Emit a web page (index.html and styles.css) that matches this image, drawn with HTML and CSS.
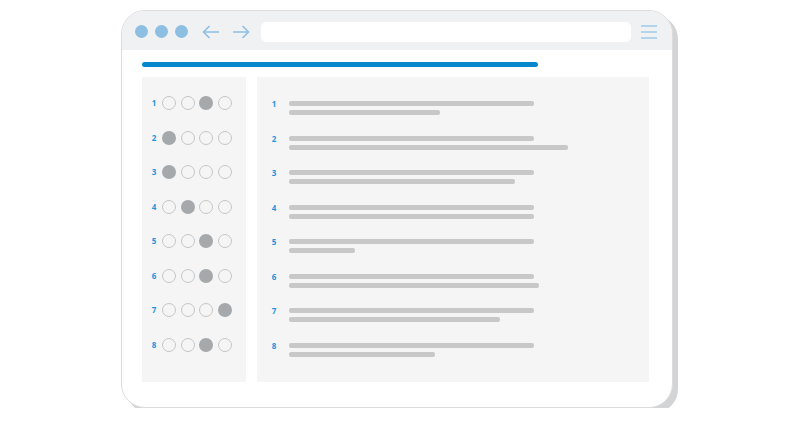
FILE: index.html
```html
<!DOCTYPE html>
<html>
<head>
  <title>Survey Preview</title>
  <link rel="stylesheet" href="styles.css">
</head>
<body>
  <div class="window">
    <div class="titlebar">
      <span class="dot"></span>
      <span class="dot"></span>
      <span class="dot"></span>
      <svg class="arrow back" width="18" height="14" viewBox="0 0 18 14">
        <path d="M17 7H1.5M7.5 1L1.5 7l6 6" fill="none" stroke="#8dbfe3" stroke-width="1.6"/>
      </svg>
      <svg class="arrow fwd" width="18" height="14" viewBox="0 0 18 14">
        <path d="M1 7h15.5M10.5 1l6 6-6 6" fill="none" stroke="#8dbfe3" stroke-width="1.6"/>
      </svg>
      <div class="url"></div>
      <svg class="menu" width="16" height="14" viewBox="0 0 16 14">
        <path d="M0 1h16M0 7h16M0 13h16" stroke="#9ecae8" stroke-width="1.6"/>
      </svg>
    </div>

    <div class="content">
      <div class="progress"></div>
      <div class="panels">
        <div class="panel answers" id="answers"></div>
        <div class="panel questions" id="questions"></div>
      </div>
    </div>
  </div>

  <script>
    // which circle is picked on each row, and the width of each second line
    const picks = [3, 1, 1, 2, 3, 3, 4, 3];
    const lineWidths = [151, 279, 226, 245, 66, 250, 211, 146];

    const answers = document.getElementById("answers");
    const questions = document.getElementById("questions");

    for (let i = 0; i < picks.length; i++) {
      const row = document.createElement("div");
      row.className = "answer-row";
      let html = `<span class="num">${i + 1}</span>`;
      for (let c = 1; c <= 4; c++) {
        html += `<span class="circle${c === picks[i] ? " filled" : ""}"></span>`;
      }
      row.innerHTML = html;
      answers.appendChild(row);

      const q = document.createElement("div");
      q.className = "question-row";
      q.innerHTML = `<span class="num">${i + 1}</span>
        <div class="lines">
          <div class="line"></div>
          <div class="line" style="width: ${lineWidths[i]}px"></div>
        </div>`;
      questions.appendChild(q);
    }
  </script>
</body>
</html>
```

FILE: styles.css
```css
body {
  margin: 0;
  background-color: #fff;
  font-family: "Open Sans", Arial, sans-serif;
}

.window {
  box-sizing: border-box;
  margin: 10px 0 0 121px;
  width: 552px;
  height: 398px;
  border: 1px solid #dcdcde;
  border-radius: 24px;
  background-color: #fff;
  box-shadow: 5px 5px 0 #d3d4d6;
  overflow: hidden;
}

.titlebar {
  box-sizing: border-box;
  display: flex;
  align-items: center;
  height: 39px;
  padding: 2px 0 0 13px;
  background-color: #f0f1f3;
}

.dot {
  width: 13px;
  height: 13px;
  border-radius: 50%;
  background-color: #8dbfe3;
  margin-right: 7px;
}

.arrow.back {
  margin-left: 7px;
}

.arrow.fwd {
  margin-left: 12px;
}

.url {
  flex: 1;
  height: 20px;
  margin: 0 10px 0 11px;
  border-radius: 5px;
  background-color: #fff;
}

.menu {
  margin-right: 15px;
}

.content {
  padding: 12px 23px 0 20px;
}

.progress {
  width: 396px;
  height: 5px;
  border-radius: 3px;
  background-color: #0788cc;
}

.panels {
  display: flex;
  gap: 11px;
  margin-top: 10px;
}

.panel {
  box-sizing: border-box;
  height: 305px;
  background-color: #f5f5f5;
}

.answers {
  width: 104px;
  padding: 19px 0 0 7px;
}

.questions {
  flex: 1;
  padding: 24px 0 0 12px;
}

.num {
  width: 10px;
  font-size: 8px;
  font-weight: 700;
  line-height: 10px;
  text-align: center;
  color: #2196dc;
}

.answer-row {
  display: flex;
  align-items: flex-start;
  height: 34.5px;
}

.answer-row .num {
  margin: 2px 3px 0 0;
}

.circle {
  box-sizing: border-box;
  width: 14px;
  height: 14px;
  margin-right: 4.6px;
  border: 1px solid #c6c6c6;
  border-radius: 50%;
}

.circle.filled {
  border: none;
  background-color: #a5a9ab;
}

.question-row {
  display: flex;
  height: 34.5px;
}

.question-row .num {
  margin-top: -2px;
  margin-right: 10px;
}

.lines {
  display: flex;
  flex-direction: column;
  gap: 4px;
}

.line {
  width: 245px;
  height: 5px;
  border-radius: 2px;
  background-color: #c8c8c8;
}
```
